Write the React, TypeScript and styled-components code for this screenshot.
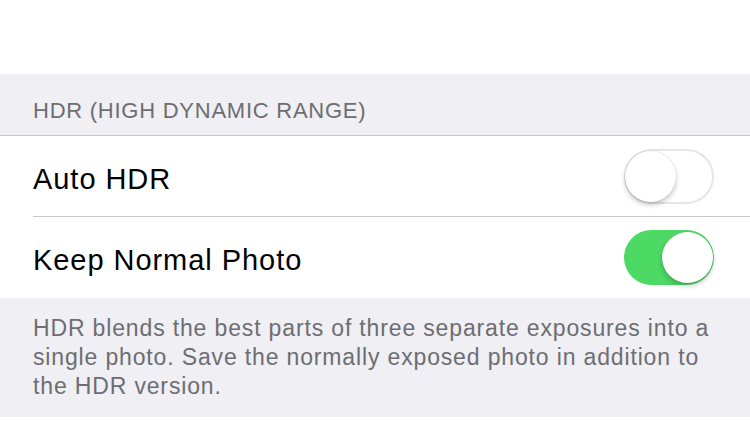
import React from "react";
import styled, { createGlobalStyle } from "styled-components";

const Global = createGlobalStyle`
  html, body { margin: 0; padding: 0; background: #ffffff; }
  body { font-family: "Liberation Sans", Arial, sans-serif; -webkit-font-smoothing: antialiased; }
`;

const Page = styled.div`
  width: 750px;
  height: 422px;
  overflow: hidden;
  background: #ffffff;
  padding-top: 74px;
  box-sizing: border-box;
`;

const SectionHeader = styled.div`
  background: #efeff4;
  height: 62px;
  box-sizing: border-box;
  padding: 0 33px 11px;
  display: flex;
  align-items: flex-end;
  color: #6d6d72;
  font-size: 22px;
  letter-spacing: 0.75px;
  border-bottom: 1px solid #c8c7cc;
`;

const Group = styled.div`
  background: #ffffff;
`;

const Row = styled.div<{ $last?: boolean }>`
  height: 81px;
  box-sizing: border-box;
  margin-left: 33px;
  padding-right: 36px;
  display: flex;
  align-items: center;
  justify-content: space-between;
  border-bottom: ${(p) => (p.$last ? "none" : "1px solid #c8c7cc")};
`;

const Label = styled.span`
  font-size: 29px;
  color: #000000;
  letter-spacing: 0.95px;
  padding-top: 6px;
`;

const Track = styled.div<{ $on: boolean }>`
  position: relative;
  width: 90px;
  height: 55px;
  border-radius: 28px;
  box-sizing: border-box;
  background: ${(p) => (p.$on ? "#4cd964" : "#ffffff")};
  border: ${(p) => (p.$on ? "none" : "2px solid #e5e5ea")};
`;

const Knob = styled.div<{ $on: boolean }>`
  position: absolute;
  top: ${(p) => (p.$on ? "2px" : "0px")};
  left: ${(p) => (p.$on ? "38px" : "-1px")};
  width: 51px;
  height: 51px;
  border-radius: 50%;
  background: #ffffff;
  box-shadow: 0 3px 5px rgba(0, 0, 0, 0.22), 0 0 0 0.5px rgba(0, 0, 0, 0.08);
`;

const Footer = styled.div`
  background: #efeff4;
  padding: 16px 33px 0;
  height: 119px;
  box-sizing: border-box;
  color: #6d6d72;
  font-size: 23px;
  line-height: 29px;
  letter-spacing: 0.85px;
`;

function Switch({ on }: { on: boolean }) {
  return (
    <Track $on={on}>
      <Knob $on={on} />
    </Track>
  );
}

export default function App() {
  return (
    <>
      <Global />
      <Page>
        <SectionHeader>HDR (HIGH DYNAMIC RANGE)</SectionHeader>
        <Group>
          <Row>
            <Label>Auto HDR</Label>
            <Switch on={false} />
          </Row>
          <Row $last>
            <Label>Keep Normal Photo</Label>
            <Switch on={true} />
          </Row>
        </Group>
        <Footer>
          HDR blends the best parts of three separate exposures into a single photo. Save the
          normally exposed photo in addition to the HDR version.
        </Footer>
      </Page>
    </>
  );
}
